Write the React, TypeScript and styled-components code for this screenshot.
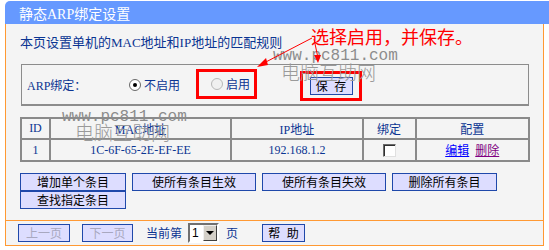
import styled, { createGlobalStyle } from 'styled-components'

const GlobalStyle = createGlobalStyle`
  html, body { margin: 0; padding: 0; background: #ffffff; }
  body {
    font-family: "Liberation Serif", "Noto Sans CJK SC", serif;
    font-size: 12px;
    color: #0b3592;
  }
`

const Page = styled.div`
  position: relative;
  width: 549px;
  height: 250px;
  padding-top: 1px;
  box-sizing: border-box;
  overflow: hidden;
`

const Header = styled.div`
  margin-left: 5px;
  height: 23px;
  background: #6699ff;
  border-top-left-radius: 5px;
  color: #ffffff;
  font-size: 14px;
  display: flex;
  align-items: center;
  padding-left: 14px;
`

const Panel = styled.div`
  margin-left: 5px;
  width: 539px;
  box-sizing: border-box;
  border-left: 1px solid #ff9933;
  border-right: 1px solid #ff9933;
  border-bottom: 1px solid #ff9933;
  background: #f4f4f4;
`

const Body = styled.div`
  padding: 12px 0 11px 14px;
`

const Desc = styled.div`
  font-size: 13px;
  line-height: 14px;
  height: 14px;
`

const Fieldset = styled.div`
  margin: 14px 0 0 1px;
  width: 508px;
  height: 42px;
  box-sizing: border-box;
  border: 1px solid #8c8c8c;
  border-bottom-width: 2px;
  display: flex;
  align-items: center;
  padding-left: 5px;
`

const Label = styled.div`
  width: 102px;
`

const RadioItem = styled.label`
  display: flex;
  align-items: center;
  gap: 3px;
`

const Radio = styled.span<{ $checked?: boolean; $dim?: boolean }>`
  position: relative;
  width: 12px;
  height: 12px;
  border-radius: 50%;
  box-sizing: border-box;
  border: 1px solid ${p => (p.$dim ? '#b8b8b8' : '#6a6a6a')};
  background: ${p => (p.$dim ? '#f0f0f0' : '#ffffff')};
  &::after {
    content: '';
    display: ${p => (p.$checked ? 'block' : 'none')};
    position: absolute;
    left: 3px;
    top: 3px;
    width: 4px;
    height: 4px;
    border-radius: 50%;
    background: #000;
  }
`

const RedBox = styled.div<{ $w: number }>`
  width: ${p => p.$w}px;
  height: 30px;
  box-sizing: border-box;
  border: 3px solid #ff0000;
  display: flex;
  align-items: center;
`

const EnableBox = styled(RedBox)`
  margin-left: 16px;
  margin-top: -2px;
  padding-left: 12px;
`

const SaveBox = styled(RedBox)`
  margin-left: 43px;
  margin-top: 2px;
  justify-content: center;
`

const Btn = styled.div<{ $w: number; $off?: boolean }>`
  width: ${p => p.$w}px;
  height: 18px;
  box-sizing: border-box;
  border: 1px solid #1f48aa;
  background: #ddddff;
  color: ${p => (p.$off ? '#a8a8c0' : '#000000')};
  font-family: "Noto Sans CJK SC", sans-serif;
  font-size: 12px;
  line-height: 16px;
  text-align: center;
  white-space: pre;
  word-spacing: 4px;
`

const Table = styled.table`
  margin: 11px 0 0 0;
  border-collapse: collapse;
  width: 510px;
  td {
    border: 2px solid #8a8a8a;
    text-align: center;
    padding: 0;
  }
`

const HeadRow = styled.tr`
  height: 21px;
`

const DataRow = styled.tr`
  height: 22px;
`

const Check = styled.span`
  display: inline-block;
  vertical-align: middle;
  width: 13px;
  height: 13px;
  box-sizing: border-box;
  border: 1px solid;
  border-color: #6a6a6a #e0e0e0 #e0e0e0 #6a6a6a;
  box-shadow: inset 1px 1px #303030;
  background: #ffffff;
`

const Link = styled.a<{ $visited?: boolean }>`
  color: ${p => (p.$visited ? '#800080' : '#0000ff')};
  text-decoration: underline;
  margin: 0 3px;
`

const BtnGrid = styled.div`
  margin-top: 11px;
  display: grid;
  grid-template-columns: 106px 124px 124px 105px;
  column-gap: 6px;
`

const Footer = styled.div`
  border-top: 1px solid #ff9933;
  height: 24px;
  display: flex;
  align-items: center;
  padding-left: 12px;
`

const FootText = styled.span<{ $ml: number }>`
  margin-left: ${p => p.$ml}px;
  font-size: 12px;
`

const Select = styled.div`
  margin-left: 6px;
  width: 31px;
  height: 20px;
  box-sizing: border-box;
  border: 2px solid;
  border-color: #707070 #ffffff #ffffff #707070;
  background: #ffffff;
  display: flex;
  align-items: stretch;
  color: #000;
  font-family: "Liberation Sans", sans-serif;
`

const SelectValue = styled.span`
  flex: 1;
  padding-left: 2px;
  line-height: 16px;
`

const SelectArrow = styled.span`
  width: 14px;
  background: #d4d0c8;
  border: 1px solid;
  border-color: #f0f0f0 #404040 #404040 #f0f0f0;
  box-sizing: border-box;
  display: flex;
  align-items: center;
  justify-content: center;
  &::after {
    content: '';
    border-left: 4px solid transparent;
    border-right: 4px solid transparent;
    border-top: 4px solid #000;
  }
`

const Mark = styled.div<{ $x: number; $y: number }>`
  position: absolute;
  left: ${p => p.$x}px;
  top: ${p => p.$y}px;
  white-space: nowrap;
  pointer-events: none;
`

const WebMark = styled(Mark)`
  font-family: "Liberation Mono", monospace;
  font-size: 16px;
  line-height: 14px;
  color: #8c8c8c;
`

const NameMark = styled(Mark)`
  font-family: "Noto Sans CJK SC", sans-serif;
  font-weight: 300;
  font-size: 19px;
  line-height: 20px;
  color: #9a9a9a;
`

const Note = styled(Mark)`
  font-family: "Noto Sans CJK SC", sans-serif;
  font-size: 18px;
  line-height: 20px;
  color: #ff0000;
`

const Arrows = styled.svg`
  position: absolute;
  left: 0;
  top: 0;
  pointer-events: none;
`

export default function App() {
  return (
    <Page>
      <GlobalStyle />
      <Header>静态ARP绑定设置</Header>
      <Panel>
        <Body>
          <Desc>本页设置单机的MAC地址和IP地址的匹配规则</Desc>
          <Fieldset>
            <Label>ARP绑定：</Label>
            <RadioItem>
              <Radio $checked />
              不启用
            </RadioItem>
            <EnableBox $w={61}>
              <RadioItem>
                <Radio $dim />
                启用
              </RadioItem>
            </EnableBox>
            <SaveBox $w={62}>
              <Btn $w={43}>保 存</Btn>
            </SaveBox>
          </Fieldset>
          <Table>
            <colgroup>
              <col style={{ width: 29 }} />
              <col style={{ width: 182 }} />
              <col style={{ width: 132 }} />
              <col style={{ width: 53 }} />
              <col style={{ width: 114 }} />
            </colgroup>
            <tbody>
              <HeadRow>
                <td>ID</td>
                <td>MAC地址</td>
                <td>IP地址</td>
                <td>绑定</td>
                <td>配置</td>
              </HeadRow>
              <DataRow>
                <td>1</td>
                <td>1C-6F-65-2E-EF-EE</td>
                <td>192.168.1.2</td>
                <td>
                  <Check />
                </td>
                <td>
                  <Link>编辑</Link>
                  <Link $visited>删除</Link>
                </td>
              </DataRow>
            </tbody>
          </Table>
          <BtnGrid>
            <Btn $w={106}>增加单个条目</Btn>
            <Btn $w={124}>使所有条目生效</Btn>
            <Btn $w={124}>使所有条目失效</Btn>
            <Btn $w={105}>删除所有条目</Btn>
            <Btn $w={106}>查找指定条目</Btn>
          </BtnGrid>
        </Body>
        <Footer>
          <Btn $w={52} $off>
            上一页
          </Btn>
          <FootText $ml={0} style={{ width: 12 }} />
          <Btn $w={51} $off>
            下一页
          </Btn>
          <FootText $ml={13}>当前第</FootText>
          <Select>
            <SelectValue>1</SelectValue>
            <SelectArrow />
          </Select>
          <FootText $ml={7}>页</FootText>
          <FootText $ml={24}>
            <Btn $w={43}>帮 助</Btn>
          </FootText>
        </Footer>
      </Panel>

      <WebMark $x={273} $y={49}>www.pc811.com</WebMark>
      <NameMark $x={281} $y={62}>电脑互助网</NameMark>
      <WebMark $x={62} $y={110}>www.pc811.com</WebMark>
      <NameMark $x={75} $y={122}>电脑互助网</NameMark>
      <Note $x={311} $y={26}>选择启用，并保存。</Note>

      <Arrows width={549} height={250} viewBox="0 0 549 250">
        <g stroke="#ff0000" strokeWidth={1} fill="#ff0000">
          <line x1={312} y1={38} x2={262} y2={64} />
          <polygon points="257,67 266,58 268,65" stroke="none" />
          <line x1={314} y1={39} x2={318} y2={58} />
          <polygon points="318,63 314,55 321,55" stroke="none" />
        </g>
      </Arrows>
    </Page>
  )
}
